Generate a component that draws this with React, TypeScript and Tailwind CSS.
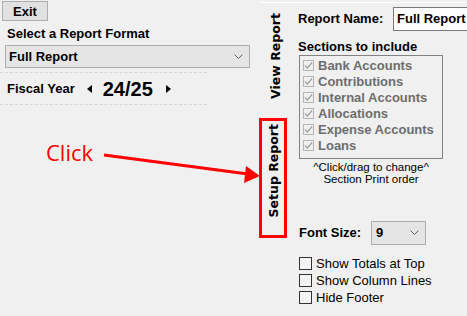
import React from 'react';

const sections = [
  'Bank Accounts',
  'Contributions',
  'Internal Accounts',
  'Allocations',
  'Expense Accounts',
  'Loans',
];

const options = ['Show Totals at Top', 'Show Column Lines', 'Hide Footer'];

const Chevron: React.FC = () => (
  <svg width="9" height="6" viewBox="0 0 9 6" className="shrink-0">
    <path d="M0.5 0.5 L4.5 4.5 L8.5 0.5" fill="none" stroke="#606060" strokeWidth="1" />
  </svg>
);

const GrayCheck: React.FC = () => (
  <span className="w-[11px] h-[11px] border border-[#b4b4b4] bg-[#f0f0f0] flex items-center justify-center shrink-0">
    <svg width="9" height="9" viewBox="0 0 9 9">
      <path d="M1 4.5 L3.5 7 L8 1.5" fill="none" stroke="#a0a0a0" strokeWidth="1.2" />
    </svg>
  </span>
);

const VerticalLabel: React.FC<{ text: string }> = ({ text }) => (
  <span className="[writing-mode:vertical-rl] rotate-180 text-[12.5px] font-bold text-black font-['DejaVu_Sans',sans-serif] leading-none">
    {text}
  </span>
);

export default function App() {
  return (
    <div className="relative w-[467px] h-[316px] overflow-hidden bg-[#f0f0f0] flex font-['Liberation_Sans',Arial,sans-serif] text-black">
      {/* left column */}
      <div className="w-[259px] shrink-0 flex flex-col">
        <button className="ml-[2px] mt-[1px] w-[46px] h-[20px] bg-[#e1e1e1] border border-[#adadad] text-[13px] font-bold leading-none">
          Exit
        </button>
        <div className="mt-[5px] ml-[7px] text-[13px] font-bold leading-[16px]">Select a Report Format</div>
        <div className="mt-[3px] ml-[5px] w-[245px] h-[23px] bg-[#e5e5e5] border border-[#adadad] flex items-center justify-between pl-[3px] pr-[6px]">
          <span className="text-[13px] font-bold">Full Report</span>
          <Chevron />
        </div>
        <div className="mt-[4px] w-[207px] border-t border-dashed border-[#d6d6d6]" />
        <div className="mt-[6px] h-[20px] ml-[7px] flex items-center">
          <span className="text-[13px] font-bold">Fiscal Year</span>
          <svg width="5" height="8" viewBox="0 0 5 8" className="ml-[12px]">
            <polygon points="5,0 0,4 5,8" fill="#000" />
          </svg>
          <span className="ml-[11px] text-[20px] font-bold leading-none">24/25</span>
          <svg width="5" height="8" viewBox="0 0 5 8" className="ml-[13px]">
            <polygon points="0,0 5,4 0,8" fill="#000" />
          </svg>
        </div>
        <div className="mt-[5px] w-[207px] border-t border-dashed border-[#d6d6d6]" />
      </div>

      {/* vertical tabs */}
      <div className="w-[31px] shrink-0 flex flex-col border-t border-white mt-[2px]">
        <div className="h-[115px] flex items-center justify-center pl-[4px] pb-[10px]">
          <VerticalLabel text="View Report" />
        </div>
        <div className="w-[28px] h-[120px] border-[3px] border-[#f00] flex items-start justify-center pl-[2px] pt-[3px]">
          <VerticalLabel text="Setup Report" />
        </div>
      </div>

      {/* right panel */}
      <div className="flex-1 flex flex-col pl-[8px] border-t border-white mt-[2px]">
        <div className="mt-[4px] flex items-center h-[24px]">
          <span className="text-[13px] font-bold w-[95px] shrink-0">Report Name:</span>
          <div className="h-[24px] w-[90px] shrink-0 bg-white border border-[#7a7a7a] flex items-center pl-[3px]">
            <span className="text-[13px] font-bold whitespace-nowrap">Full Report</span>
          </div>
        </div>
        <div className="mt-[8px] text-[13px] font-bold leading-[16px]">Sections to include</div>
        <div className="ml-[1px] w-[144px] h-[104px] bg-[#f0f0f0] border border-[#828282] pt-[1px] pl-[3px] flex flex-col">
          {sections.map((s) => (
            <div key={s} className="h-[16px] flex items-center gap-[4px]">
              <GrayCheck />
              <span className="text-[13px] font-bold text-[#6d6d6d] leading-none">{s}</span>
            </div>
          ))}
        </div>
        <div className="w-[146px] text-center text-[11.5px] leading-[12px] mt-[2px]">
          <div>^Click/drag to change^</div>
          <div>Section Print order</div>
        </div>
        <div className="mt-[36px] flex items-center h-[24px]">
          <span className="ml-[1px] text-[13px] font-bold w-[72px] shrink-0">Font Size:</span>
          <div className="w-[55px] h-[24px] bg-[#e5e5e5] border border-[#adadad] flex items-center justify-between pl-[4px] pr-[6px]">
            <span className="text-[13px] font-bold">9</span>
            <Chevron />
          </div>
        </div>
        <div className="mt-[10px] flex flex-col">
          {options.map((o) => (
            <div key={o} className="h-[17px] flex items-center">
              <span className="ml-[1px] w-[13px] h-[13px] border border-[#333] bg-[#f4f4f4] shrink-0" />
              <span className="ml-[4px] text-[13px] leading-none">{o}</span>
            </div>
          ))}
        </div>
      </div>

      {/* annotation */}
      <span className="absolute left-[46px] top-[138px] text-[22px] leading-[28px] text-[#f00] font-['Open_Sans',sans-serif]">
        Click
      </span>
      <svg className="absolute left-0 top-0 pointer-events-none" width="467" height="316" viewBox="0 0 467 316">
        <line x1="104" y1="155" x2="248" y2="174" stroke="#f00" strokeWidth="3" />
        <polygon points="260,176 246,166 244,183" fill="#f00" />
      </svg>
    </div>
  );
}
